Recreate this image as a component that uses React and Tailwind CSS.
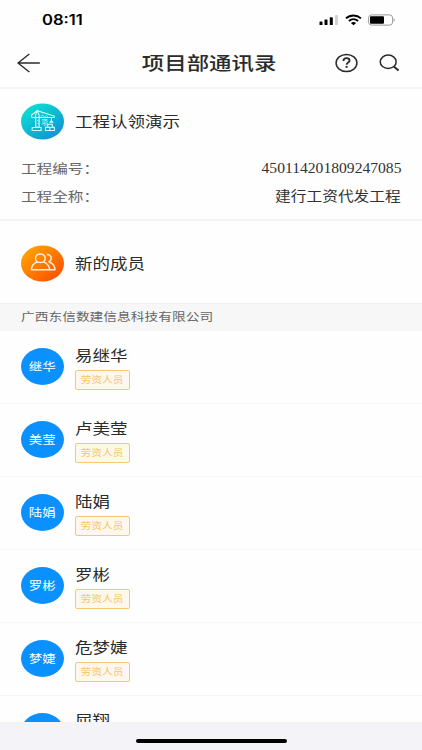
import clsx from 'clsx';

const MEMBERS = [
  { name: '易继华', short: '继华' },
  { name: '卢美莹', short: '美莹' },
  { name: '陆娟', short: '陆娟' },
  { name: '罗彬', short: '罗彬' },
  { name: '危梦婕', short: '梦婕' },
  { name: '屈翔', short: '屈翔' },
];

// Text drawn wider than the font's natural proportions
function Wide({ className, children }) {
  return (
    <span className={clsx('block scale-x-[1.2] whitespace-nowrap', className)}>{children}</span>
  );
}

function StatusBar() {
  return (
    <div className="flex h-10 shrink-0 items-center justify-between pl-[42px] pr-[26px]">
      <Wide className="origin-left font-['Inter',sans-serif] text-[13.8px] font-semibold leading-5 text-black">
        08:11
      </Wide>
      <div className="flex items-center">
        <svg width="20" height="12" viewBox="0 0 20 12" className="mr-[6px]">
          <rect x="0.5" y="7.5" width="3" height="3.5" rx="0.6" />
          <rect x="5.5" y="5.5" width="3" height="5.5" rx="0.6" />
          <rect x="10.8" y="3.3" width="3" height="7.7" rx="0.6" />
          <rect x="16" y="1" width="3" height="10" rx="0.6" fill="#d2d2d2" />
        </svg>
        <svg width="17" height="12" viewBox="0 0 17 12" className="mr-[6px]">
          <g fill="none" stroke="#000" strokeWidth="1.9">
            <path d="M1 4.4C5.3.5 11.7.5 16 4.4" />
            <path d="M3.9 7c2.7-2.3 6.5-2.3 9.2 0" />
          </g>
          <path d="M5.9 8.9c1.5-1.2 3.7-1.2 5.2 0L8.5 11.2z" />
        </svg>
        <svg width="28" height="12" viewBox="0 0 28 12">
          <rect x="0.6" y="0.9" width="24" height="10.2" rx="3" fill="#fff" stroke="#999" />
          <rect x="2" y="2.3" width="14" height="7.4" rx="1" />
          <path d="M25.6 4.2c1.5.5 1.5 3.1 0 3.6z" fill="#999" />
        </svg>
      </div>
    </div>
  );
}

function Header() {
  return (
    <header className="flex h-[49px] shrink-0 items-center border-b-2 border-[#f5f5f5] pb-0.5 pl-[17px] pr-[22px]">
      <svg width="64" height="20" viewBox="0 0 64 20" fill="none" stroke="#2b2b2b" strokeWidth="1.4">
        <path d="M12.3 1 1 10l11.3 9M1 10h21.8" />
      </svg>
      <div className="flex flex-1 justify-center pb-0.5 pl-[3px]">
        <Wide className="text-[18.7px] font-medium leading-7 text-[#2b2b2b]">项目部通讯录</Wide>
      </div>
      <div className="flex items-center gap-[21px]">
        <svg width="23" height="20" viewBox="0 0 23 20" fill="none" stroke="#2b2b2b" strokeWidth="1.5">
          <ellipse cx="11.5" cy="10" rx="10.4" ry="8.6" />
          <path d="M8.4 8c0-2 1.3-2.9 3.1-2.9s3.1 1 3.1 2.5c0 2-3 2-3 4.2" strokeWidth="1.8" />
          <path d="M10.6 13.9h2" strokeWidth="1.9" />
        </svg>
        <svg width="21" height="18" viewBox="0 0 21 18" fill="none" stroke="#2b2b2b" strokeWidth="1.5">
          <ellipse cx="9.2" cy="7.8" rx="8" ry="6.7" />
          <path d="m14.8 12.6 4.8 4" strokeWidth="2" />
        </svg>
      </div>
    </header>
  );
}

function CraneIcon() {
  return (
    <svg width="43" height="37" viewBox="0.3 0 43.4 37" className="shrink-0">
      <defs>
        <linearGradient id="teal" x1="0.1" y1="0" x2="0.9" y2="1">
          <stop offset="0" stopColor="#0ce4d4" />
          <stop offset="1" stopColor="#0f8fd2" />
        </linearGradient>
      </defs>
      <ellipse cx="22" cy="18.5" rx="21.7" ry="18.2" fill="url(#teal)" />
      <g fill="none" stroke="#d5fbfa" strokeWidth="1.1">
        <path d="M15 24.5V12l1.6-4.4L18.6 12v12.5M11 14.3V12l5.6-4.4L33.8 13v1.5H11" />
        <path d="M11.6 24.6h9v3h-9zM25 24.4h9v3.2h-9zM29.5 24.4v3.2M27.3 24.4v-3.2h4.6v3.2" />
        <path d="M31 14.5v3.2l-1.3 1.5h2.6L31 17.7" />
      </g>
      <path
        d="m15 16.5 3.6 2m-3.6 1 3.6 2m-3.6 1 3.6 2M20 14.3l2-2.6 2 2.6 2-1.8 2 1.8"
        fill="none"
        stroke="#d5fbfa"
        strokeWidth="0.6"
      />
      <text x="21" y="22" fontSize="6.4" fill="#d5fbfa">项</text>
    </svg>
  );
}

function PeopleIcon() {
  return (
    <svg width="43" height="37" viewBox="0.3 0 43.4 37" className="shrink-0">
      <defs>
        <linearGradient id="orange" x1="0.1" y1="0.1" x2="0.9" y2="0.9">
          <stop offset="0" stopColor="#ffa400" />
          <stop offset="1" stopColor="#ff5000" />
        </linearGradient>
      </defs>
      <ellipse cx="22" cy="18.5" rx="21.7" ry="18.2" fill="url(#orange)" />
      <g fill="none" stroke="#fff0d8" strokeWidth="1.5" strokeLinejoin="round">
        <ellipse cx="19.8" cy="13.2" rx="4.9" ry="4.4" />
        <path d="M16.6 16.8c-3.6 1.5-5.6 4.2-5.9 8h18.6c-.3-3.8-2.5-6.5-6.2-8" />
        <path d="M26.4 9.5c2.6-.1 4.4 1.5 4.4 3.6 0 1.6-.9 2.9-2.4 3.6 3.8 1.4 6 4.2 6.2 8.1h-5.3" />
      </g>
    </svg>
  );
}

function InfoRow({ label, children }) {
  return (
    <div className="flex h-7 items-center justify-between">
      <Wide className="origin-left text-[13px] text-[#666]">{label}</Wide>
      {children}
    </div>
  );
}

function MemberRow({ member }) {
  return (
    <li className="flex h-[73px] shrink-0 items-center border-b border-[#f6f6f6] pb-px pl-[21px]">
      <div className="flex h-[37px] w-[43px] items-center justify-center rounded-[50%] bg-[#0a91ff] pb-0.5">
        <Wide className="text-[11.2px] leading-4 text-white">{member.short}</Wide>
      </div>
      <div className="ml-[11px] flex flex-col items-start">
        <Wide className="origin-left text-[14.6px] leading-6 text-[#2b2b2b]">{member.name}</Wide>
        <div className="mt-[3px] flex h-5 w-[55px] items-center justify-center rounded-[2px] border border-[#f4ca70] bg-[#fef8ec]">
          <Wide className="text-[9px] leading-4 text-[#f3c566]">劳资人员</Wide>
        </div>
      </div>
    </li>
  );
}

export default function App() {
  return (
    <div className="flex h-[750px] w-[422px] flex-col overflow-hidden bg-[#fefefe] font-['Noto_Sans_CJK_SC',sans-serif]">
      <StatusBar />
      <Header />
      <main className="flex min-h-0 flex-1 flex-col overflow-hidden">
        <section className="h-[132px] shrink-0 border-b-2 border-[#f5f5f5] px-[21px] pt-[14px]">
          <div className="mb-[14px] flex items-center gap-[11px]">
            <CraneIcon />
            <Wide className="-mt-0.5 origin-left text-[14.6px] leading-6 text-[#2b2b2b]">
              工程认领演示
            </Wide>
          </div>
          <InfoRow label="工程编号：">
            <span className="block origin-right scale-x-[1.115] font-['Liberation_Serif',serif] text-[14px] text-[#333]">
              450114201809247085
            </span>
          </InfoRow>
          <InfoRow label="工程全称：">
            <Wide className="origin-right text-[13.1px] text-[#333]">建行工资代发工程</Wide>
          </InfoRow>
        </section>
        <section className="flex h-[82px] shrink-0 items-center gap-[11px] px-[21px] pt-[3px]">
          <PeopleIcon />
          <Wide className="-mt-px origin-left text-[14.6px] leading-6 text-[#2b2b2b]">新的成员</Wide>
        </section>
        <div className="flex h-7 shrink-0 items-center border-t border-[#f1f1f1] bg-[#f7f7f7] pb-[3px] pl-[21px]">
          <Wide className="origin-left text-[11.45px] leading-5 text-[#666]">
            广西东信数建信息科技有限公司
          </Wide>
        </div>
        <ul className="flex flex-col">
          {MEMBERS.map((member) => (
            <MemberRow key={member.name} member={member} />
          ))}
        </ul>
      </main>
      <footer className="flex h-[28px] shrink-0 justify-center bg-[#f3f3f8] pt-[17px]">
        <div className="h-1 w-[151px] rounded-full bg-black" />
      </footer>
    </div>
  );
}
